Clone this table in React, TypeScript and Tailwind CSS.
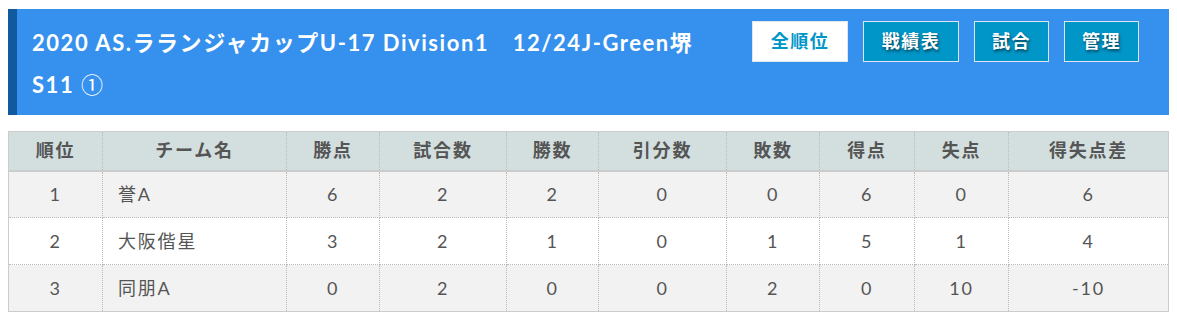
import React from 'react';

const font = { fontFamily: '"Lato", "Noto Sans CJK JP", sans-serif' };

const columns = [
  { label: '順位', w: 'w-[94px]' },
  { label: 'チーム名', w: 'w-[184px]' },
  { label: '勝点', w: 'w-[93px]' },
  { label: '試合数', w: 'w-[127px]' },
  { label: '勝数', w: 'w-[92px]' },
  { label: '引分数', w: 'w-[128px]' },
  { label: '敗数', w: 'w-[93px]' },
  { label: '得点', w: 'w-[95px]' },
  { label: '失点', w: 'w-[94px]' },
  { label: '得失点差', w: 'w-[160px]' },
];

const rows = [
  ['1', '誉A', '6', '2', '2', '0', '0', '6', '0', '6'],
  ['2', '大阪偕星', '3', '2', '1', '0', '1', '5', '1', '4'],
  ['3', '同朋A', '0', '2', '0', '0', '2', '0', '10', '-10'],
];

const tabs = [
  { label: '全順位', active: true, w: 'w-[96px]' },
  { label: '戦績表', active: false, w: 'w-[96px]' },
  { label: '試合', active: false, w: 'w-[75px]' },
  { label: '管理', active: false, w: 'w-[75px]' },
];

export default function App() {
  return (
    <div className="bg-white min-h-[320px] px-2 pt-[9px]" style={font}>
      {/* title bar */}
      <div className="flex bg-[#3690ed] border-l-[9px] border-[#115a9e] h-[106px]">
        <h1 className="w-[720px] pl-[15px] pt-[14px] text-[22px] leading-[40px] font-bold text-white tracking-[0.07em]">
          2020 AS.ラランジャカップU-17 Division1　12/24J-Green堺 S11{' '}
          <span className="font-normal [font-family:'Noto_Sans_CJK_JP',sans-serif]">①</span>
        </h1>
        <div className="flex gap-[15px] pt-3 pl-[15px]">
          {tabs.map((t) => (
            <button
              key={t.label}
              className={
                t.active
                  ? `${t.w} h-[41px] bg-white border border-[#dde6ee] text-[#0096c8] text-[18px] font-bold tracking-[0.08em]`
                  : `${t.w} h-[41px] bg-[#0096c8] border border-[#dde6ee] text-white text-[18px] font-bold tracking-[0.08em] [text-shadow:1px_2px_3px_rgba(0,0,0,0.55)]`
              }
            >
              {t.label}
            </button>
          ))}
        </div>
      </div>

      {/* standings */}
      <table className="mt-4 w-[1160px] table-fixed border-collapse border border-[#cccccc] text-[#555555]">
        <colgroup>
          {columns.map((c) => (
            <col key={c.label} className={c.w} />
          ))}
        </colgroup>
        <thead>
          <tr className="bg-[#d3dfdf] h-[39px] border-b-2 border-[#cccccc]">
            {columns.map((c) => (
              <th
                key={c.label}
                className="border-x border-dotted border-[#bbbbbb] text-[18px] font-bold tracking-[0.1em] text-center"
              >
                {c.label}
              </th>
            ))}
          </tr>
        </thead>
        <tbody>
          {rows.map((r, i) => (
            <tr key={i} className={`h-[47px] ${i % 2 === 0 ? 'bg-[#f2f2f2]' : 'bg-white'}`}>
              {r.map((v, j) => (
                <td
                  key={j}
                  className={`border border-dotted border-[#bbbbbb] text-[18px] tracking-[0.1em] ${
                    j === 1 ? 'text-left pl-[15px]' : 'text-center'
                  }`}
                >
                  {v}
                </td>
              ))}
            </tr>
          ))}
        </tbody>
      </table>
    </div>
  );
}
